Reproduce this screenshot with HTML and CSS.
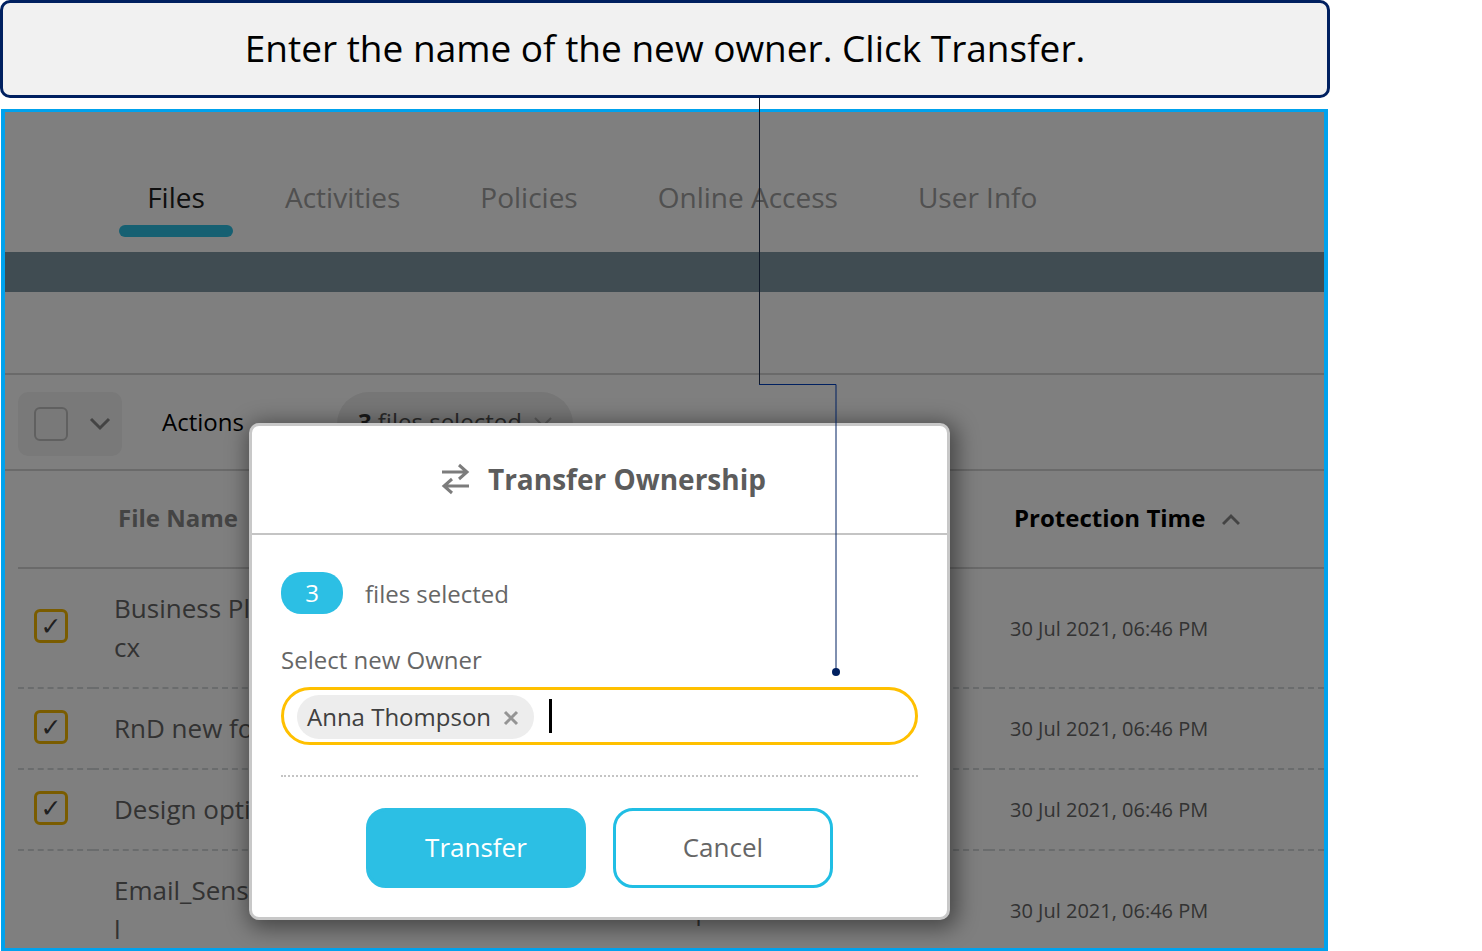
FILE: index.html
```html
<!DOCTYPE html>
<html lang="en">
<head>
  <meta charset="UTF-8">
  <meta name="viewport" content="width=device-width, initial-scale=1.0">
  <title>Transfer Ownership</title>
  <link rel="stylesheet" href="styles.css">
</head>
<body>
  <div class="page">
    <p class="callout">Enter the name of the new owner. Click Transfer.</p>

    <main class="screen">
      <nav class="tabs">
        <a class="tab active" href="#files">Files</a>
        <a class="tab" href="#activities">Activities</a>
        <a class="tab" href="#policies">Policies</a>
        <a class="tab" href="#online">Online Access</a>
        <a class="tab" href="#user">User Info</a>
      </nav>
      <div class="band"></div>

      <div class="toolbar">
        <div class="select-all">
          <input type="checkbox" class="check" aria-label="Select all">
          <svg class="chevron" width="22" height="14" viewBox="0 0 22 14"><path d="M2 2l9 9 9-9"/></svg>
        </div>
        <button type="button" class="actions">Actions</button>
        <button type="button" class="selected-pill">
          <span><b>3</b> files selected</span>
          <svg class="chevron light" width="18" height="12" viewBox="0 0 18 12"><path d="M1 2l8 8 8-8"/></svg>
        </button>
      </div>

      <!-- Files -->
      <table class="files">
        <thead>
          <tr>
            <th class="col-check"></th>
            <th class="col-name">File Name</th>
            <th class="col-owner"></th>
            <th class="col-time">Protection Time
              <svg class="chevron" width="18" height="14" viewBox="0 0 18 14"><path d="M1 11l8-8 8 8"/></svg>
            </th>
          </tr>
        </thead>
        <tbody>
          <tr>
            <td><input type="checkbox" class="check" aria-label="Business Pl" checked></td>
            <td class="name">Business Pl<br>cx</td>
            <td></td>
            <td class="time">30 Jul 2021, 06:46 PM</td>
          </tr>
          <tr>
            <td><input type="checkbox" class="check" aria-label="RnD new fo" checked></td>
            <td class="name">RnD new fo</td>
            <td></td>
            <td class="time">30 Jul 2021, 06:46 PM</td>
          </tr>
          <tr>
            <td><input type="checkbox" class="check" aria-label="Design opti" checked></td>
            <td class="name">Design opti</td>
            <td></td>
            <td class="time">30 Jul 2021, 06:46 PM</td>
          </tr>
          <tr>
            <td></td>
            <td class="name">Email_Sens<br>l</td>
            <td class="owner">p</td>
            <td class="time">30 Jul 2021, 06:46 PM</td>
          </tr>
        </tbody>
      </table>

      <!-- Dialog -->
      <div class="overlay">
        <form class="modal">
          <h2 class="modal-title">
            <svg class="swap" width="30" height="32" viewBox="0 0 30 32"><path d="M1 9h25M18 2l8 7-8 7M28 23H3M11 16l-8 7 8 7"/></svg>
            Transfer Ownership
          </h2>
          <div class="modal-body">
            <div class="count"><span class="badge">3</span> files selected</div>
            <label class="owner-label" for="owner">Select new Owner</label>
            <div class="owner-field">
              <span class="chip">Anna Thompson
                <button type="button" class="remove" aria-label="Remove">
                  <svg width="16" height="16" viewBox="0 0 16 16"><path d="M2 2l12 12M14 2L2 14"/></svg>
                </button>
              </span>
              <span class="caret"></span>
              <input type="text" id="owner">
            </div>
            <div class="buttons">
              <button type="submit" class="btn primary">Transfer</button>
              <button type="button" class="btn">Cancel</button>
            </div>
          </div>
        </form>
      </div>
    </main>

    <svg class="connector" width="92" height="590" viewBox="0 0 92 590">
      <path class="line-top" d="M9.5 0v286"/>
      <path class="line-bottom" d="M9 286.500h77V574"/>
      <circle cx="86" cy="574" r="4"/>
    </svg>
  </div>
</body>
</html>
```

FILE: styles.css
```css
* {
  box-sizing: border-box;
}

body {
  margin: 0;
  background: #fff;
  font-family: "Open Sans", "Noto Sans", sans-serif;
  color: #666;
}

button, input {
  font: inherit;
  color: inherit;
}

.page {
  position: relative;
  display: flex;
  flex-direction: column;
  height: 100vh;
  margin-right: 152px;
}

.callout {
  margin: 0 0 11px;
  padding: 19px 20px 21px;
  border: 3px solid #002060;
  border-radius: 10px;
  background: #f1f1f1;
  color: #000;
  font-size: 37px;
  line-height: 52px;
  text-align: center;
}

.screen {
  position: relative;
  flex: 1;
  min-height: 0;
  margin: 0 2px 0 1px;
  border: 3px solid #00a2ed;
  border-width: 3px 4px;
  background: #fff;
  overflow: hidden;
}

/* tabs */
.tabs {
  display: flex;
  gap: 24px;
  padding: 65px 0 15px 114px;
}

.tab {
  padding: 0 28px;
  color: #a0a0a0;
  font-size: 28px;
  line-height: 40px;
  text-decoration: none;
  white-space: nowrap;
}

.tab.active {
  padding: 0;
  color: #202020;
  text-align: center;
}

.tab.active::after {
  content: "";
  display: block;
  width: 114px;
  height: 12px;
  margin-top: 8px;
  border-radius: 6px;
  background: #2cc0e4;
}

.band {
  height: 40px;
  margin-bottom: 81px;
  background: #8098a4;
}

/* toolbar */
.toolbar {
  display: flex;
  align-items: center;
  height: 98px;
  padding: 3px 0 0 13px;
  border-top: 2px solid #d4d4d4;
  border-bottom: 2px solid #d4d4d4;
}

.select-all {
  display: flex;
  align-items: center;
  gap: 21px;
  width: 104px;
  height: 64px;
  padding-left: 16px;
  border-radius: 10px;
  background: #f2f2f2;
}

.check {
  appearance: none;
  display: block;
  width: 34px;
  height: 34px;
  margin: 0;
  border: 2px solid #c0c0c0;
  border-radius: 6px;
}

.check:checked {
  border: 3px solid #f4b800;
}

.check:checked::after {
  content: "✓";
  display: block;
  color: #404040;
  font: bold 25px/30px "DejaVu Sans", sans-serif;
  text-align: center;
}

.chevron {
  fill: none;
  stroke: #888;
  stroke-width: 3;
}

.chevron.light {
  stroke: #b4b4b4;
  stroke-width: 2;
}

.actions {
  margin-left: 40px;
  padding: 0 0 4px;
  border: 0;
  background: none;
  color: #000;
  font-size: 24px;
}

.selected-pill {
  display: flex;
  align-items: center;
  gap: 12px;
  height: 64px;
  margin-left: 93px;
  padding: 0 21px 4px;
  border: 0;
  border-radius: 32px;
  background: #ececec;
  color: #555;
  font-size: 24px;
}

.selected-pill b {
  color: #333;
}

/* table */
.files {
  width: calc(100% - 13px);
  margin-left: 13px;
  border-spacing: 0;
  table-layout: fixed;
}

.files th {
  height: 98px;
  padding: 0 0 4px 25px;
  border-bottom: 2px solid #d4d4d4;
  color: #888;
  font-size: 24px;
  text-align: left;
  white-space: nowrap;
}

.files td {
  padding: 20px 0 20px 21px;
  border-bottom: 2px dashed #d4d8da;
  line-height: 39px;
}

.files td:first-child {
  padding: 0 0 4px 16px;
}

.files .col-check {
  width: 75px;
}

.files .col-name {
  width: 40%;
}

.files .col-time {
  width: 335px;
  color: #000;
}

.col-time .chevron {
  margin-left: 10px;
}

.name {
  font-size: 26px;
}

.time {
  font-size: 20px;
}

.files .owner {
  padding-left: 80px;
  font-size: 24px;
}

/* dialog */
.overlay {
  position: absolute;
  inset: 0;
  padding: 311px 0 0 244px;
  background: rgba(0, 0, 0, 0.5);
}

.modal {
  width: 65.2%;
  border: 3px solid #c8c8c8;
  border-radius: 10px;
  background: #fff;
  box-shadow: 3px 4px 22px 4px rgba(0, 0, 0, 0.45);
}

.modal-title {
  display: flex;
  align-items: center;
  justify-content: center;
  gap: 17px;
  height: 109px;
  margin: 0;
  padding: 0 0 2px 8px;
  border-bottom: 2px solid #c4c4c4;
  color: #5c5c5c;
  font-size: 28px;
}

.swap {
  fill: none;
  stroke: #7c7c7c;
  stroke-width: 3;
}

.modal-body {
  padding: 37px 29px 29px;
  font-size: 24px;
}

.count {
  display: flex;
  align-items: center;
  gap: 22px;
}

.badge {
  width: 62px;
  border-radius: 20px;
  background: #2cbfe4;
  color: #fff;
  line-height: 42px;
  text-align: center;
}

.owner-label {
  display: block;
  margin: 28px 0 9px;
  line-height: 36px;
}

.owner-field {
  display: flex;
  align-items: center;
  height: 58px;
  padding: 2px 13px 0;
  border: 3px solid #ffc000;
  border-radius: 29px;
}

.chip {
  display: flex;
  align-items: center;
  gap: 12px;
  padding: 0 15px 0 10px;
  border-radius: 22px;
  background: #ededed;
  color: #404040;
  line-height: 44px;
  white-space: nowrap;
}

.remove {
  display: flex;
  padding: 2px 0 0;
  border: 0;
  background: none;
}

.remove path {
  stroke: #949494;
  stroke-width: 3;
}

.caret {
  width: 3px;
  height: 34px;
  margin: 0 0 3px 15px;
  background: #000;
}

.owner-field input {
  flex: 1;
  min-width: 0;
  border: 0;
  outline: 0;
  background: none;
}

.buttons {
  display: flex;
  justify-content: center;
  gap: 27px;
  margin-top: 30px;
  padding-top: 31px;
  border-top: 2px dotted #c4c4c4;
}

.btn {
  width: 220px;
  height: 80px;
  padding-bottom: 4px;
  border: 3px solid #20bee4;
  border-radius: 20px;
  background: #fff;
  font-size: 26px;
}

.btn.primary {
  border-color: #2cbfe4;
  background: #2cbfe4;
  color: #fff;
}

/* line from the callout to the owner field */
.connector {
  position: absolute;
  top: 98px;
  left: 750px;
  fill: #002060;
  pointer-events: none;
}

.connector path {
  fill: none;
}

.line-top {
  stroke: #101828;
}

.line-bottom {
  stroke: #002060;
}
```
